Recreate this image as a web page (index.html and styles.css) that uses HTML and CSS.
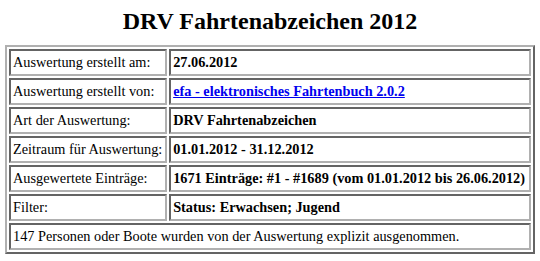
FILE: index.html
```html
<!DOCTYPE html>
<html lang="de">
<head>
<meta charset="utf-8">
<title>DRV Fahrtenabzeichen 2012</title>
<link rel="stylesheet" href="styles.css">
</head>
<body>
<h1 class="title">DRV Fahrtenabzeichen 2012</h1>
<table class="info">
  <tr><td class="label">Auswertung erstellt am:</td><td class="value">27.06.2012</td></tr>
  <tr><td class="label">Auswertung erstellt von:</td><td class="value"><a class="link" href="#">efa - elektronisches Fahrtenbuch 2.0.2</a></td></tr>
  <tr><td class="label">Art der Auswertung:</td><td class="value">DRV Fahrtenabzeichen</td></tr>
  <tr><td class="label">Zeitraum für Auswertung:</td><td class="value">01.01.2012 - 31.12.2012</td></tr>
  <tr><td class="label">Ausgewertete Einträge:</td><td class="value">1671 Einträge: #1 - #1689 (vom 01.01.2012 bis 26.06.2012)</td></tr>
  <tr><td class="label">Filter:</td><td class="value">Status: Erwachsen; Jugend</td></tr>
  <tr><td class="note" colspan="2">147 Personen oder Boote wurden von der Auswertung explizit ausgenommen.</td></tr>
</table>
</body>
</html>
```
FILE: styles.css
```css
html, body {
  background: #ffffff;
}
body {
  margin: 5px;
  font-family: "Liberation Serif", "Times New Roman", serif;
  font-size: 14.3px;
  color: #000000;
}
.title {
  margin: 3px 0 10px;
  font-size: 24px;
  line-height: 27px;
  font-weight: bold;
  text-align: center;
}
.info {
  width: 100%;
  border-collapse: separate;
  border-spacing: 2px;
  border-style: solid;
  border-width: 2px;
  border-color: #b0b0b0 #646464 #646464 #b0b0b0;
}
.info td {
  border-style: solid;
  border-width: 2px;
  border-color: #646464 #b0b0b0 #b0b0b0 #646464;
  padding: 2px;
  line-height: 19px;
  text-align: left;
  vertical-align: middle;
}
.label {
  white-space: nowrap;
}
.value {
  font-weight: bold;
  white-space: nowrap;
}
.link {
  color: #0000ee;
  text-decoration: underline;
}
```
